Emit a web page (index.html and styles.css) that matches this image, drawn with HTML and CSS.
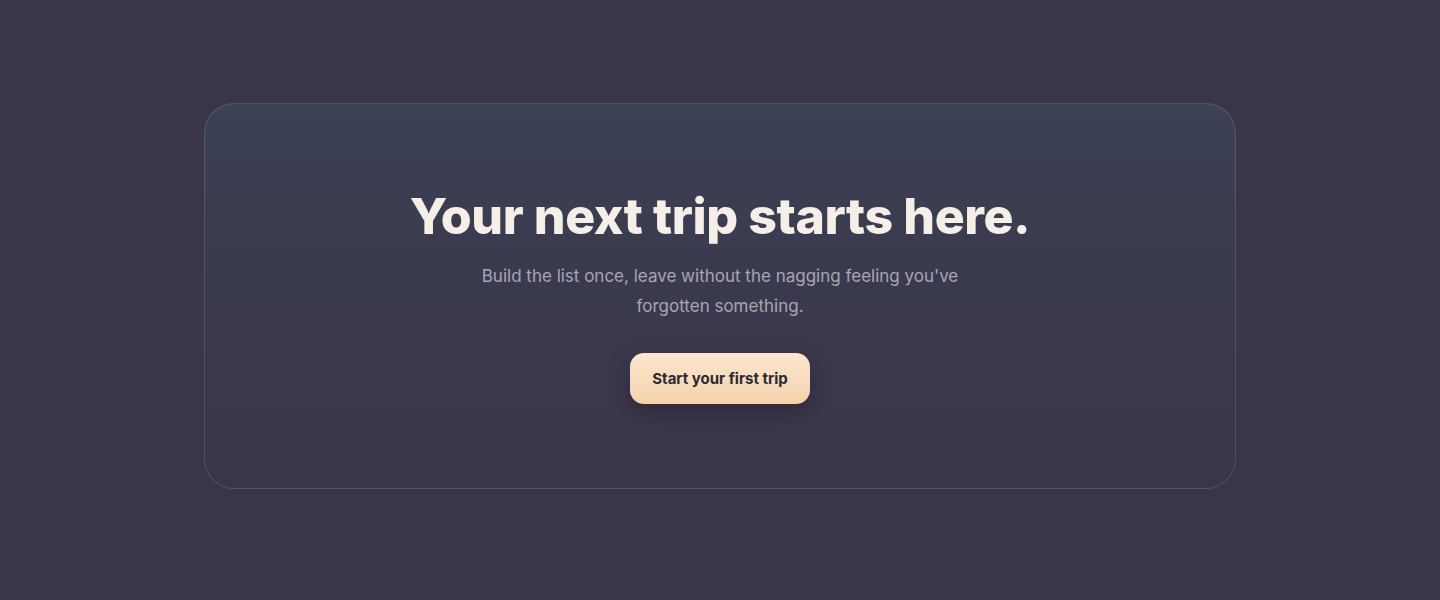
FILE: index.html
```html
<!DOCTYPE html>
<html lang="en">
<head>
<meta charset="utf-8">
<title>Your next trip starts here</title>
<link rel="stylesheet" href="styles.css">
</head>
<body>
<main class="page">
  <section class="card">
    <h1 class="title">Your next trip starts here.</h1>
    <p class="lede">Build the list once, leave without the nagging feeling you've forgotten something.</p>
    <button class="cta" type="button">Start your first trip</button>
  </section>
</main>
</body>
</html>
```
FILE: styles.css
```css
html, body {
  margin: 0;
  padding: 0;
}
body {
  background: #3a3547;
  font-family: Inter, "Noto Sans", "Liberation Sans", sans-serif;
  height: 600px;
  overflow: hidden;
}
.page {
  display: flex;
  justify-content: center;
  padding-top: 103px;
}
.card {
  box-sizing: border-box;
  width: 1032px;
  height: 386px;
  border-radius: 30px;
  border: 1px solid rgba(255, 255, 255, 0.12);
  background: linear-gradient(180deg, #3c4155 0%, #3a3a4e 45%, #3a3649 100%);
  display: flex;
  flex-direction: column;
  align-items: center;
  padding-top: 84px;
}
.title {
  margin: 0;
  color: #f6efe7;
  font-size: 50px;
  font-weight: 800;
  letter-spacing: -0.4px;
  line-height: 56px;
}
.lede {
  margin: 17px 0 0;
  max-width: 500px;
  text-align: center;
  color: #a8a5b4;
  font-size: 17px;
  line-height: 30px;
  letter-spacing: 0;
}
.cta {
  margin-top: 32px;
  width: 180px;
  height: 51px;
  border: none;
  border-radius: 14px;
  background: linear-gradient(180deg, #fce7d0 0%, #f4d2ab 100%);
  color: #2a2a33;
  font-family: inherit;
  font-size: 15px;
  font-weight: 700;
  box-shadow: 0 8px 20px rgba(20, 16, 30, 0.35);
  cursor: pointer;
}
```
